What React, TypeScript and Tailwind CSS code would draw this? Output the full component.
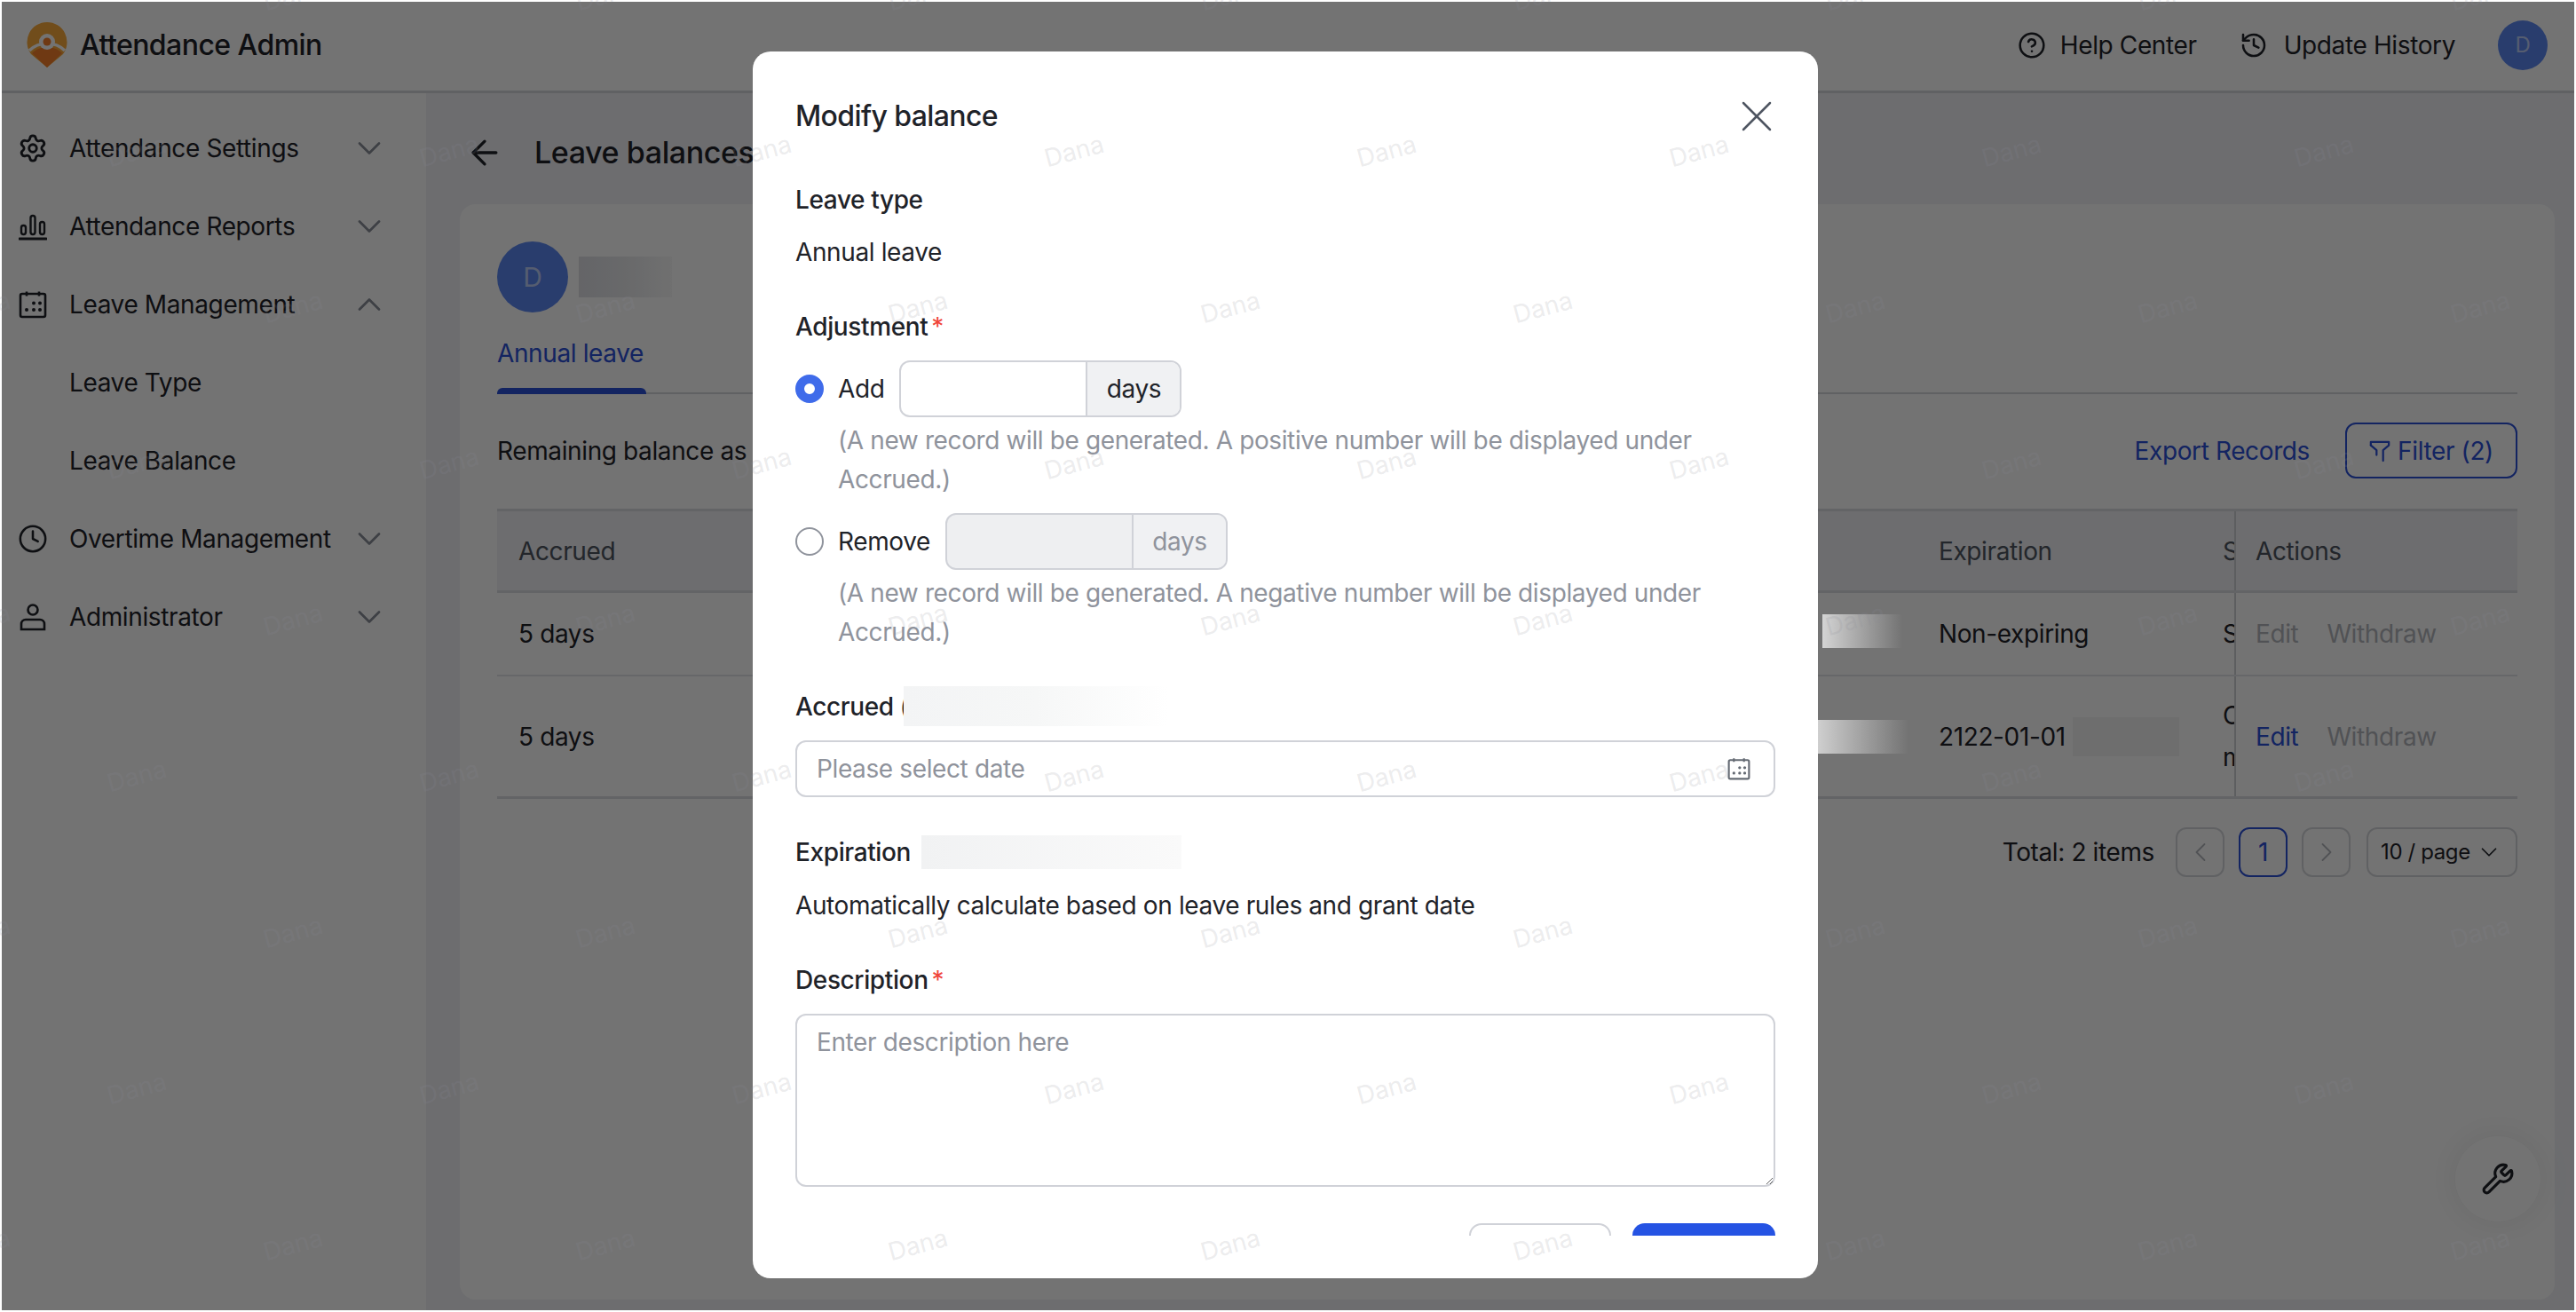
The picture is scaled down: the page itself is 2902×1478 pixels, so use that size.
import React from "react";
import {
  ArrowLeft,
  ChevronDown,
  ChevronLeft,
  ChevronRight,
  ChevronUp,
  CircleHelp,
  Clock,
  History,
  Settings,
  Wrench,
  X,
} from "lucide-react";

const BarsIcon = () => (
  <svg viewBox="0 0 32 32" className="w-[32px] h-[32px]" fill="none" stroke="currentColor" strokeWidth="2.4">
    <rect x="3" y="15" width="5" height="10" rx="2.5" />
    <rect x="13.5" y="4" width="5" height="21" rx="2.5" />
    <rect x="24" y="11" width="5" height="14" rx="2.5" />
    <path d="M1 30h30" strokeWidth="3" strokeLinecap="round" />
  </svg>
);

const CalendarIcon = ({ size = "w-[32px] h-[32px]" }: { size?: string }) => (
  <svg viewBox="0 0 32 32" className={size} fill="none" stroke="currentColor" strokeWidth="2.6">
    <rect x="2" y="4" width="28" height="26" rx="2" />
    <path d="M9 1.5v5M23 1.5v5" />
    <g fill="currentColor" stroke="none">
      <circle cx="17" cy="14.5" r="2" />
      <circle cx="24" cy="14.5" r="2" />
      <circle cx="9" cy="22" r="2" />
      <circle cx="17" cy="22" r="2" />
      <circle cx="24" cy="22" r="2" />
    </g>
  </svg>
);

const PersonIcon = () => (
  <svg viewBox="0 0 32 32" className="w-[32px] h-[32px]" fill="none" stroke="currentColor" strokeWidth="2.6">
    <circle cx="16" cy="8" r="5.5" />
    <path d="M3 30v-6a5 5 0 0 1 5-5h16a5 5 0 0 1 5 5v6z" />
  </svg>
);

const FunnelIcon = () => (
  <svg viewBox="0 0 26 28" className="w-[24px] h-[26px]" fill="none" stroke="currentColor" strokeWidth="2.4" strokeLinecap="round" strokeLinejoin="round">
    <path d="M2 7V3h22v4l-7 6v13" />
    <path d="M2 7l7 6v6" />
  </svg>
);

const Logo = () => (
  <svg viewBox="0 0 46 54" className="w-[46px] h-[54px] shrink-0">
    <path d="M23 1a22.5 22.5 0 0 1 18 36L23 52 5 37A22.5 22.5 0 0 1 23 1z" fill="#fbab3c" />
    <path d="M6 36c5-5 11-7 17-7s12 2 17 7L23 52z" fill="#f77f2a" />
    <path d="M3 33c6-6 13-8 20-8s14 2 20 8" fill="none" stroke="#fff" strokeWidth="3.5" />
    <circle cx="23" cy="23" r="9" fill="#fff" />
    <circle cx="23" cy="23" r="4.5" fill="#f77f2a" />
  </svg>
);

const navItems = [
  { label: "Attendance Settings", icon: <Settings className="w-[34px] h-[34px]" strokeWidth={2} />, chevron: "down" },
  { label: "Attendance Reports", icon: <BarsIcon />, chevron: "down" },
  { label: "Leave Management", icon: <CalendarIcon />, chevron: "up" },
  { label: "Leave Type" },
  { label: "Leave Balance" },
  { label: "Overtime Management", icon: <Clock className="w-[36px] h-[36px]" strokeWidth={1.8} />, chevron: "down" },
  { label: "Administrator", icon: <PersonIcon />, chevron: "down" },
];

// watermark grid: staggered rows 176px apart, columns 352px apart
const watermarks: { x: number; y: number }[] = [];
for (let row = 0; row < 9; row++) {
  const startX = row % 2 === 0 ? -22 : 154;
  for (let col = 0; col < 9; col++) {
    watermarks.push({ x: startX + col * 352, y: -6 + row * 176 });
  }
}

const Sidebar = () => (
  <aside className="w-[478px] shrink-0 bg-white pt-[18px]">
    {navItems.map((item) => (
      <div key={item.label} className="h-[88px] flex items-center pl-[18px] pr-[42px]">
        <div className="w-[34px] h-[36px] flex items-center justify-center text-[#1f2329]">{item.icon}</div>
        <span className="ml-[24px] flex-1 text-[#1f2329]">{item.label}</span>
        {item.chevron === "down" && <ChevronDown className="w-[44px] h-[44px] text-[#8a8f99]" strokeWidth={1.5} />}
        {item.chevron === "up" && <ChevronUp className="w-[44px] h-[44px] text-[#8a8f99]" strokeWidth={1.5} />}
      </div>
    ))}
  </aside>
);

const Header = () => (
  <header className="h-[103px] shrink-0 bg-white border-b-[3px] border-[#d6d8dc] flex items-center pl-[28px] pr-[30px] pb-[2px]">
    <Logo />
    <span className="ml-[14px] text-[32px] tracking-[-0.55px] font-medium text-[#1f2329]">Attendance Admin</span>
    <div className="ml-auto flex items-center text-[#1f2329]">
      <CircleHelp className="w-[32px] h-[32px]" strokeWidth={1.9} />
      <span className="ml-[16px]">Help Center</span>
      <History className="ml-[48px] w-[32px] h-[32px]" strokeWidth={1.9} />
      <span className="ml-[18px]">Update History</span>
      <div className="ml-[48px] w-[56px] h-[56px] rounded-full bg-[#5c88f2] text-white/60 text-[24px] flex items-center justify-center">D</div>
    </div>
  </header>
);

const cellStatus = "w-[13px] shrink-0 overflow-hidden whitespace-nowrap";

const Table = () => (
  <div className="mt-[34px]">
    <div className="h-[95px] bg-[#f1f2f5] border-y-[3px] border-[#dcdee2] flex items-center text-[#4e5561]">
      <div className="flex-1 pl-[24px]">Accrued</div>
      <div className="w-[320px] shrink-0">Expiration</div>
      <div className={cellStatus}>Status</div>
      <div className="w-[319px] h-full shrink-0 border-l-2 border-[#cfd1d6] pl-[22px] flex items-center">Actions</div>
    </div>
    <div className="h-[94px] border-b-2 border-[#e3e4e8] flex items-center text-[#1f2329]">
      <div className="flex-1 pl-[24px]">5 days</div>
      <div className="w-[320px] shrink-0">Non-expiring</div>
      <div className={cellStatus}>Successful</div>
      <div className="w-[319px] h-full shrink-0 border-l-2 border-[#cfd1d6] pl-[22px] flex items-center gap-[32px] text-[#b3b6bc]">
        <span>Edit</span>
        <span>Withdraw</span>
      </div>
    </div>
    <div className="h-[138px] border-b-[3px] border-[#dcdee2] flex items-center text-[#1f2329]">
      <div className="flex-1 pl-[24px]">5 days</div>
      <div className="w-[320px] shrink-0 flex items-center">
        <span>2122-01-01</span>
        <div className="ml-[8px] w-[120px] h-[44px] bg-[#f3f3f4]" />
      </div>
      <div className={`${cellStatus} leading-[47px]`}>
        <div>Completed</div>
        <div>manually</div>
      </div>
      <div className="w-[319px] h-full shrink-0 border-l-2 border-[#cfd1d6] pl-[22px] flex items-center gap-[32px]">
        <span className="text-[#2b50d8]">Edit</span>
        <span className="text-[#b3b6bc]">Withdraw</span>
      </div>
    </div>
  </div>
);

const Pagination = () => (
  <div className="mt-[32px] h-[56px] flex items-center justify-end text-[#1f2329]">
    <span>Total: 2 items</span>
    <div className="ml-[24px] w-[55px] h-[56px] border-2 border-[#d6d8dc] rounded-[12px] flex items-center justify-center text-[#b3b6bc]">
      <ChevronLeft className="w-[36px] h-[36px] shrink-0" strokeWidth={1.2} />
    </div>
    <div className="ml-[16px] w-[55px] h-[56px] border-2 border-[#2b50d8] rounded-[12px] flex items-center justify-center text-[#2b50d8]">1</div>
    <div className="ml-[16px] w-[55px] h-[56px] border-2 border-[#d6d8dc] rounded-[12px] flex items-center justify-center text-[#b3b6bc]">
      <ChevronRight className="w-[36px] h-[36px] shrink-0" strokeWidth={1.2} />
    </div>
    <div className="ml-[18px] w-[170px] h-[56px] border-2 border-[#d6d8dc] rounded-[12px] flex items-center pl-[14px] text-[24px]">
      <span>10 / page</span>
      <ChevronDown className="ml-[6px] w-[30px] h-[30px]" strokeWidth={1.4} />
    </div>
  </div>
);

const Page = () => (
  <main className="flex-1 min-w-0 bg-[#f1f2f6] pl-[38px] pr-[22px] pb-[12px] flex flex-col">
    <div className="h-[125px] shrink-0 flex items-center pt-[9px]">
      <ArrowLeft className="ml-[6px] w-[44px] h-[44px] text-[#1f2329]" strokeWidth={1.8} />
      <span className="ml-[34px] text-[34px] tracking-[-0.4px] font-medium text-[#1f2329]">Leave balances</span>
    </div>
    <section className="flex-1 bg-white rounded-[18px] px-[42px] pt-[42px]">
      <div className="flex items-center">
        <div className="w-[80px] h-[80px] rounded-full bg-[#5c88f2] text-white/60 text-[30px] flex items-center justify-center">D</div>
        <div className="ml-[12px] w-[105px] h-[46px] bg-gradient-to-r from-[#dfe0e5] via-[#e8e9ec] to-[#f8f8f8]" />
      </div>
      <div className="mt-[24px] h-[68px] border-b-2 border-[#d6d8dc]">
        <div className="w-[168px] h-[68px] flex flex-col">
          <span className="leading-[44px] text-[#2b50d8] whitespace-nowrap">Annual leave</span>
          <div className="mt-auto h-[7px] rounded-t-[6px] bg-[#2b50d8]" />
        </div>
      </div>
      <div className="mt-[32px] h-[63px] flex items-center text-[#1f2329]">
        <span>Remaining balance as of today</span>
        <span className="ml-auto text-[#2b50d8]">Export Records</span>
        <div className="ml-[40px] w-[194px] h-[63px] border-2 border-[#2b50d8] rounded-[12px] flex items-center justify-center gap-[8px] text-[#2b50d8]">
          <FunnelIcon />
          <span>Filter (2)</span>
        </div>
      </div>
      <Table />
      <Pagination />
    </section>
  </main>
);

const Radio = ({ on }: { on?: boolean }) => (
  <span
    className={
      on
        ? "w-[32px] h-[32px] shrink-0 rounded-full border-[10px] border-[#3f6bea] bg-white"
        : "w-[32px] h-[32px] shrink-0 rounded-full border-2 border-[#8f939c] bg-white"
    }
  />
);

const DaysInput = ({ disabled }: { disabled?: boolean }) => (
  <div className={`w-[318px] h-[64px] border-2 border-[#d0d2d8] rounded-[12px] overflow-hidden flex ${disabled ? "bg-[#eeeff1]" : "bg-white"}`}>
    <input className="w-[208px] h-full outline-none bg-transparent px-[20px]" disabled={disabled} />
    <div className={`flex-1 bg-[#f0f1f3] border-l-2 border-[#d0d2d8] flex items-center justify-center ${disabled ? "text-[#8f939c]" : "text-[#1f2329]"}`}>days</div>
  </div>
);

const Label = ({ text, required }: { text: string; required?: boolean }) => (
  <div className="h-[44px] flex items-center text-[#1f2329] font-medium">
    <span>{text}</span>
    {required && <span className="ml-[4px] text-[#f0453a] font-normal">*</span>}
  </div>
);

const Modal = () => (
  <div className="absolute left-[848px] top-[58px] w-[1200px] h-[1382px] bg-white rounded-[20px] px-[48px]">
    <div className="h-[1334px] overflow-hidden">
      <div className="pt-[51px] h-[95px] flex items-center justify-between">
        <span className="text-[32px] tracking-[-0.6px] leading-[44px] font-medium text-[#1f2329]">Modify balance</span>
        <X className="-mr-[9px] w-[60px] h-[60px] text-[#4e5561]" strokeWidth={1} />
      </div>
      <div className="mt-[50px]">
        <Label text="Leave type" />
      </div>
      <div className="mt-[15px] text-[#1f2329]">Annual leave</div>
      <div className="mt-[40px]">
        <Label text="Adjustment" required />
      </div>
      <div className="mt-[16px] flex items-center">
        <Radio on />
        <span className="ml-[16px] mr-[17px] text-[#1f2329]">Add</span>
        <DaysInput />
      </div>
      <div className="mt-[4px] ml-[48px] text-[#8f939c]">
        (A new record will be generated. A positive number will be displayed under Accrued.)
      </div>
      <div className="mt-[16px] flex items-center">
        <Radio />
        <span className="ml-[16px] mr-[17px] text-[#1f2329]">Remove</span>
        <DaysInput disabled />
      </div>
      <div className="mt-[4px] ml-[48px] text-[#8f939c]">
        (A new record will be generated. A negative number will be displayed under Accrued.)
      </div>
      <div className="mt-[39px] flex items-center">
        <Label text="Accrued (" />
        <div className="-ml-[6px] w-[298px] h-[45px] bg-gradient-to-r from-[#f3f4f5] via-[#f6f7f7] to-[#ffffff]" />
      </div>
      <div className="mt-[16px] h-[64px] border-2 border-[#d0d2d8] rounded-[12px] flex items-center pl-[22px] pr-[26px]">
        <input className="flex-1 outline-none placeholder:text-[#8f939c]" placeholder="Please select date" />
        <CalendarIcon size="w-[26px] h-[26px] text-[#646a73]" />
      </div>
      <div className="mt-[40px] flex items-center">
        <Label text="Expiration" />
        <div className="ml-[12px] w-[293px] h-[38px] bg-gradient-to-r from-[#f1f2f3] to-[#fafafa]" />
      </div>
      <div className="mt-[16px] text-[#1f2329]">Automatically calculate based on leave rules and grant date</div>
      <div className="mt-[40px]">
        <Label text="Description" required />
      </div>
      <textarea
        className="mt-[16px] block w-full h-[195px] border-2 border-[#d0d2d8] rounded-[12px] px-[22px] py-[8px] outline-none resize-y placeholder:text-[#8f939c]"
        placeholder="Enter description here"
      />
      <div className="mt-[41px] flex justify-end gap-[24px]">
        <button className="w-[160px] h-[64px] border-2 border-[#d0d2d8] rounded-[14px] bg-white text-[#1f2329]">Cancel</button>
        <button className="w-[161px] h-[64px] rounded-[14px] bg-[#2553e3] text-white">OK</button>
      </div>
    </div>
  </div>
);

export default function App() {
  return (
    <div className="relative w-[2902px] h-[1478px] bg-white p-[2px] overflow-hidden font-['Inter',sans-serif] text-[28px] leading-[44px] tracking-[-0.38px]">
      <div className="relative w-full h-full flex flex-col overflow-hidden">
        <Header />
        <div className="flex-1 min-h-0 flex">
          <Sidebar />
          <Page />
        </div>
        <div className="absolute left-[2764px] top-[1278px] w-[96px] h-[96px] rounded-full bg-white shadow-[0_0_40px_rgba(0,0,0,0.08)] flex items-center justify-center text-[#1f2329]">
          <Wrench className="w-[38px] h-[38px]" strokeWidth={2} />
        </div>
        <div className="absolute inset-0 bg-black/55" />
      </div>

      <Modal />

      {/* patches of redaction blur that sit on top of the dimmed page */}
      <div className="absolute left-[2053px] top-[692px] w-[90px] h-[38px] bg-gradient-to-r from-[#d4d4d4] to-[#737373]" />
      <div className="absolute left-[2048px] top-[811px] w-[102px] h-[38px] bg-gradient-to-r from-[#cfcfcf] to-[#737373]" />

      <div className="absolute inset-0 pointer-events-none overflow-hidden">
        {watermarks.map((w) => (
          <span
            key={`${w.x}-${w.y}`}
            className="absolute text-[28px] leading-[30px] tracking-normal text-[rgba(140,140,150,0.18)] -rotate-[15deg] -translate-x-1/2 -translate-y-1/2"
            style={{ left: w.x, top: w.y }}
          >
            Dana
          </span>
        ))}
      </div>
    </div>
  );
}
